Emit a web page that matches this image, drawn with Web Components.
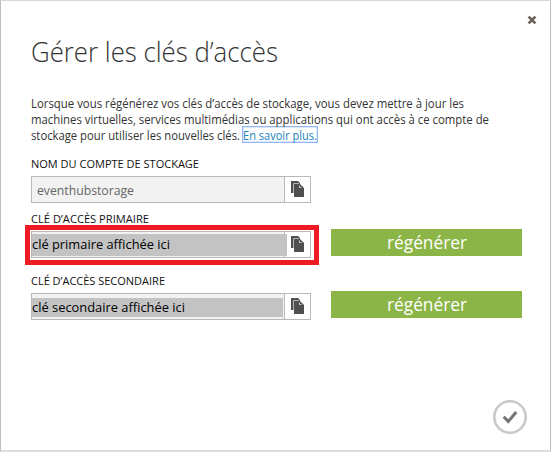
<!DOCTYPE html>
<html lang="fr"><head><meta charset="utf-8"><title>Gérer les clés d’accès</title>
<style>body{margin:0;background:#fff;font-family:"Open Sans","Noto Sans",sans-serif;overflow:hidden}</style></head>
<body>
<key-dialog>
  <close-button slot="close"></close-button>
  <fit-text slot="title" width="247">Gérer les clés d’accès</fit-text>
  <fit-text slot="text" width="433">Lorsque vous régénérez vos clés d’accès de stockage, vous devez mettre à jour les</fit-text>
  <fit-text slot="text" width="458">machines virtuelles, services multimédias ou applications qui ont accès à ce compte de</fit-text>
  <fit-text slot="last" width="209">stockage pour utiliser les nouvelles clés.</fit-text>
  <more-link slot="last"><fit-text width="74">En savoir plus.</fit-text></more-link>
  <key-field><fit-text slot="label" width="168">NOM DU COMPTE DE STOCKAGE</fit-text><fit-text width="97">eventhubstorage</fit-text></key-field>
  <key-field kind="primary"><fit-text slot="label" width="118">CLÉ D’ACCÈS PRIMAIRE</fit-text><fit-text width="138">clé primaire affichée ici</fit-text><regen-button slot="action"></regen-button></key-field>
  <key-field kind="secondary"><fit-text slot="label" width="134">CLÉ D’ACCÈS SECONDAIRE</fit-text><fit-text width="153">clé secondaire affichée ici</fit-text><regen-button slot="action"></regen-button></key-field>
  <confirm-button slot="footer"></confirm-button>
</key-dialog>
<script>
const define = (name, html, ready) => customElements.define(name, class extends HTMLElement {
  constructor(){ super(); this.attachShadow({mode:'open'}).innerHTML = html; }
  connectedCallback(){ if (ready) ready(this); }
});
define('close-button', `<style>:host{display:block;width:10px;height:10px}svg{display:block}</style>
<svg width="10" height="10" viewBox="0 0 10 10"><path d="M1.6 1.6 8.4 8.4M8.4 1.6 1.6 8.4" stroke="#6b6359" stroke-width="2.7"/></svg>`);
define('more-link', `<style>:host{display:block;box-sizing:border-box;width:76px;height:17px;margin:-2px 0 0 2px;border:1px solid #94b8f5;box-shadow:inset 0 0 0 .5px #b9d0f8;color:#1883bd;line-height:17px}
a{display:block;text-decoration:underline;text-underline-offset:1px}</style><a><slot></slot></a>`);
define('copy-icon', `<style>:host{display:block;width:13px;height:16px}svg{display:block}</style>
<svg width="13" height="16" viewBox="0 0 13 16"><path d="M0 0h7l2 2v1H3v9H0z" fill="#505050"/><path d="M2.5 12V2.5H8" fill="none" stroke="#b5b5b5"/><path d="M3 3h6l4 4v9H3z" fill="#505050"/><path d="M8.5 4.5v2H10.5" fill="none" stroke="#ccc"/></svg>`);
define('regen-button', `<style>:host{display:flex;box-sizing:border-box;width:191px;height:27px;background:#8bb546;color:#fff;font-size:18.5px;line-height:25px;justify-content:center}</style><fit-text width="80">régénérer</fit-text>`);
define('confirm-button', `<style>:host{display:block;width:36px;height:36px}svg{display:block}</style>
<svg width="36" height="36" viewBox="0 0 36 36"><circle cx="18" cy="18" r="15.7" fill="none" stroke="#c9c9c9" stroke-width="2.6"/><path d="M11.7 17.7 16.3 22.4 24.2 13" fill="none" stroke="#757575" stroke-width="3"/></svg>`);
define('key-field', `<style>
:host{display:block;height:55px}
.label{height:18px;font-size:11px;line-height:12px;color:#111}
.row{display:flex;gap:20px;height:27px;position:relative}
.box{display:flex;box-sizing:border-box;width:280px;height:27px;border:1px solid #b9b9b9}
.value{width:252px;box-sizing:border-box;padding-left:5px;background:#f2f2f2;color:#666;font-size:13px;line-height:27px}
.copy{flex:1;border-left:1px solid #b9b9b9;padding:4px 0 0 6px}
:host([kind=primary]){height:62px}
:host([kind=primary]) .value,:host([kind=secondary]) .value{padding:2px 0 0;color:#000}
.fill{height:100%}
:host([kind=primary]) .fill{width:255px;height:22px;line-height:20px;background:#c3c3c3;position:relative;z-index:1}
:host([kind=secondary]) .value{padding-top:4px}
:host([kind=secondary]) .fill{width:251px;height:19px;line-height:19px;background:#c3c3c3}
:host([kind=primary]) .row::after{content:"";position:absolute;box-sizing:border-box;left:-6px;top:-6px;width:294px;height:40px;border:5px solid #ed1c24}
.action{margin-top:-2px}
</style>
<div class="label"><slot name="label"></slot></div>
<div class="row"><div class="box"><div class="value"><div class="fill"><slot></slot></div></div><div class="copy"><copy-icon></copy-icon></div></div><div class="action"><slot name="action"></slot></div></div>`);
define('key-dialog', `<style>
:host{display:flex;flex-direction:column;box-sizing:border-box;width:551px;height:452px;border:1px solid #bfbfbf;border-top-color:#d8d8d8;border-bottom:2px solid #dedede;padding:0 0 0 30px}
header{display:flex;justify-content:flex-end;padding:14px 13px 0 0;height:10px}
.title{font-size:28px;font-weight:300;line-height:40px;height:40px;color:#333;margin-top:6px}
.text{margin-top:25px;height:48px;font-size:12px;line-height:16px;color:#333}
.last{display:flex}
.fields{margin-top:14px;flex:1}
footer{display:flex;justify-content:flex-end;padding:0 22px 15px 0}
</style>
<header><slot name="close"></slot></header>
<div class="title"><slot name="title"></slot></div>
<div class="text"><slot name="text"></slot><div class="last"><slot name="last"></slot></div></div>
<div class="fields"><slot></slot></div>
<footer><slot name="footer"></slot></footer>`);
// Condenses its text horizontally to the width attribute; registered last so
// that the inherited font sizes are in place when it measures.
define('fit-text', `<style>:host{display:block;white-space:nowrap}span{display:inline-block;transform-origin:0 50%}</style><span><slot></slot></span>`, el => {
  const s = el.shadowRoot.querySelector('span'), w = +el.getAttribute('width');
  el.style.width = w + 'px';
  s.style.transform = `scaleX(${w / s.getBoundingClientRect().width})`;
});
</script>
</body></html>
